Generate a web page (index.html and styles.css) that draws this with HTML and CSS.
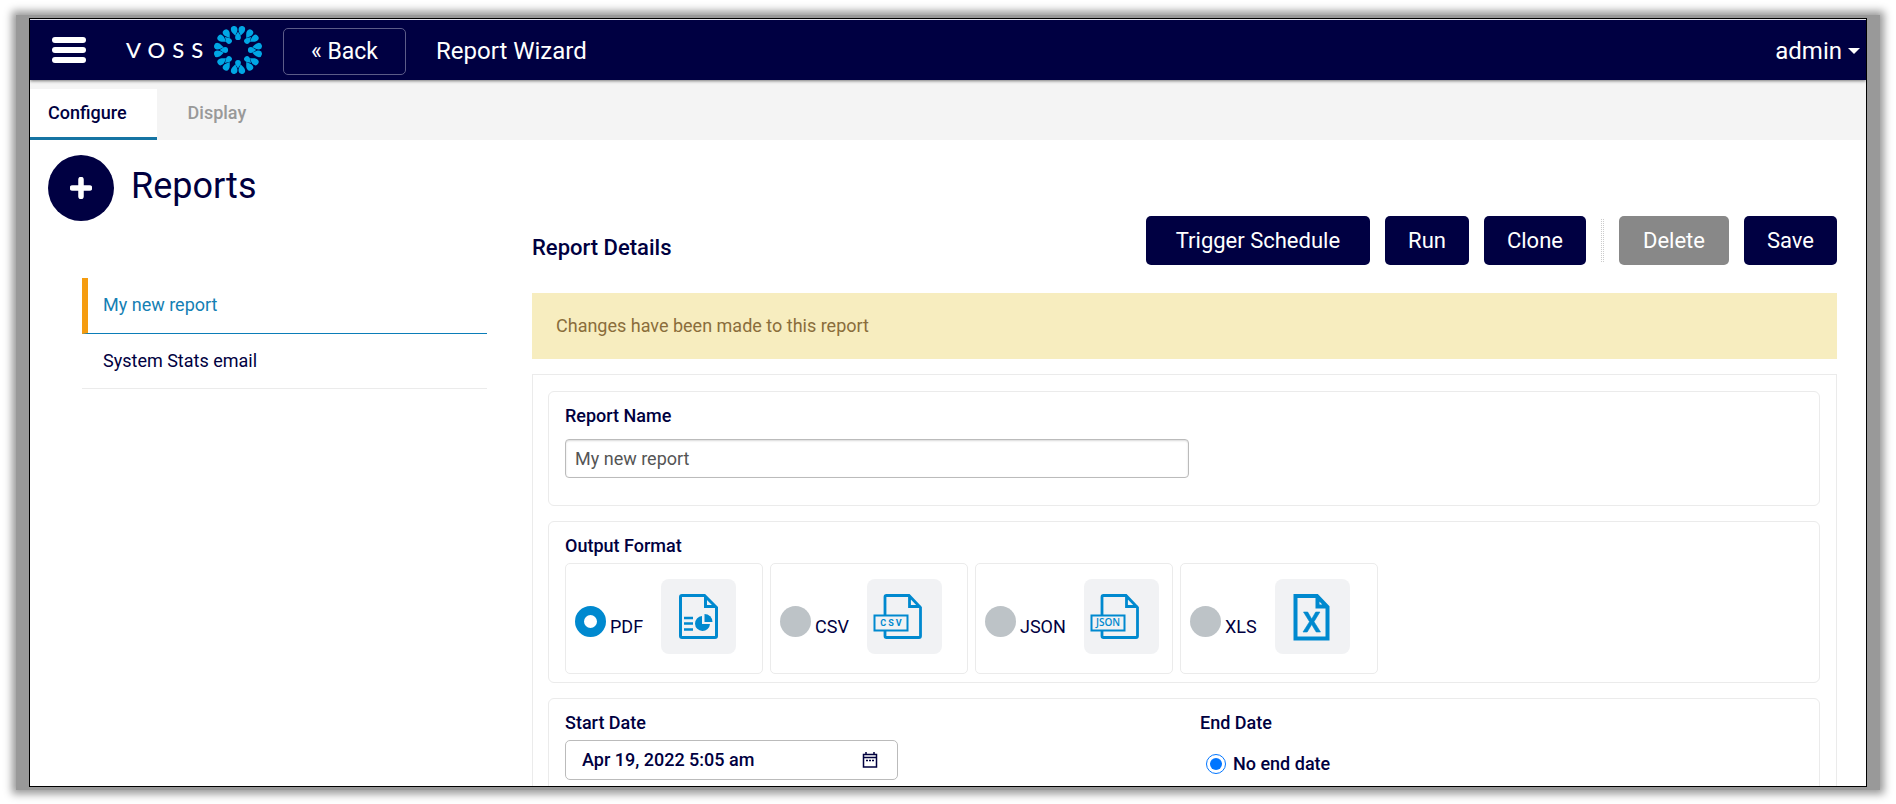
FILE: index.html
```
<!DOCTYPE html>
<html lang="en">
<head>
<meta charset="utf-8">
<title>Report Wizard</title>
<link rel="stylesheet" href="styles.css">
</head>
<body>
<div class="backdrop">
<div class="window">
  <header class="topbar">
    <button class="menu" type="button" aria-label="Menu"><span></span><span></span><span></span></button>
    <div class="brand">
      <span class="brand-name">VOSS</span>
      <svg class="brand-mark" viewBox="-25 -25 50 50" aria-hidden="true">
        <defs>
          <path id="outer" d="M0-14.500C-1.500-17-3.300-18.500-3.300-21A3.300 3.300 0 0 1 3.300-21C3.300-18.500 1.500-17 0-14.500Z"/>
          <path id="inner" d="M0-18.500C-1.200-16-2.900-14.800-2.900-12.800A2.900 2.900 0 0 0 2.900-12.800C2.900-14.800 1.200-16 0-18.500Z"/>
          <g id="petals"><use href="#outer" transform="rotate(-10.500)"/><use href="#outer" transform="rotate(10.500)"/><use href="#inner"/></g>
        </defs>
        <g fill="#00a7e5">
          <use href="#petals"/><use href="#petals" transform="rotate(45)"/><use href="#petals" transform="rotate(90)"/><use href="#petals" transform="rotate(135)"/>
          <use href="#petals" transform="rotate(180)"/><use href="#petals" transform="rotate(225)"/><use href="#petals" transform="rotate(270)"/><use href="#petals" transform="rotate(315)"/>
        </g>
      </svg>
    </div>
    <button class="back" type="button">« Back</button>
    <h1 class="page-name">Report Wizard</h1>
    <button class="user" type="button">admin<span class="caret"></span></button>
  </header>

  <nav class="tabs">
    <a class="tab tab-active" href="#configure">Configure</a>
    <a class="tab" href="#display">Display</a>
  </nav>

  <div class="content">
    <aside class="side">
      <div class="side-head">
        <button class="add" type="button" aria-label="Add report">
          <svg viewBox="0 0 22 22" width="22" height="22"><path d="M11 2.500v17M2.500 11h17" stroke="#fff" stroke-width="5.500" stroke-linecap="round"/></svg>
        </button>
        <h2 class="side-title">Reports</h2>
      </div>
      <ul class="reports">
        <li><a class="report report-active" href="#my-new-report">My new report</a></li>
        <li><a class="report" href="#system-stats">System Stats email</a></li>
      </ul>
    </aside>

    <main class="main">
      <div class="toolbar">
        <h3 class="toolbar-title">Report Details</h3>
        <button class="btn btn-wide" type="button">Trigger Schedule</button>
        <button class="btn" type="button">Run</button>
        <button class="btn" type="button">Clone</button>
        <span class="divider"></span>
        <button class="btn btn-muted" type="button">Delete</button>
        <button class="btn" type="button">Save</button>
      </div>
      <p class="notice">Changes have been made to this report</p>

      <form class="panel">
        <section class="group group-name">
          <label class="label" for="name">Report Name</label>
          <input class="name-input" id="name" type="text" value="My new report">
        </section>

        <section class="group group-format">
          <h4 class="label">Output Format</h4>
          <div class="formats">
            <label class="format">
              <input class="dot" type="radio" name="format" checked><span class="format-name">PDF</span>
              <span class="tile"><svg viewBox="0 0 75 75" fill="none" stroke="#0089cf" stroke-width="3">
                <path d="M21 16.500H43.500L55.500 28.500V57a1.500 1.500 0 0 1-1.500 1.500H21a1.500 1.500 0 0 1-1.500-1.500V18a1.500 1.500 0 0 1 1.500-1.500ZM44.500 17V27.500H55"/>
                <path d="M23 39h9M23 44.500h9M23 50.500h9" stroke-width="2.500"/>
                <path d="M41 37v8h8a7.500 7.500 0 1 1-8-8Z" fill="#0089cf" stroke="none"/><path d="M43.500 35a8 8 0 0 1 8 8h-8Z" fill="#0089cf" stroke="none"/></svg></span>
            </label>
            <label class="format">
              <input class="dot" type="radio" name="format"><span class="format-name">CSV</span>
              <span class="tile"><svg viewBox="0 0 75 75" fill="none" stroke="#0089cf">
                <path d="M18 36V18a1.500 1.500 0 0 1 1.500-1.500H42L53.500 28.500V57a1.500 1.500 0 0 1-1.500 1.500H19.500A1.500 1.500 0 0 1 18 57V51M42.500 17V27.500H53.500" stroke-width="2.800"/>
                <rect x="7.500" y="36.500" width="33" height="15" stroke-width="2"/>
                <text x="25" y="47" class="tile-text tile-csv">CSV</text></svg></span>
            </label>
            <label class="format">
              <input class="dot" type="radio" name="format"><span class="format-name">JSON</span>
              <span class="tile"><svg viewBox="0 0 75 75" fill="none" stroke="#0089cf">
                <path d="M18 36V18a1.500 1.500 0 0 1 1.500-1.500H42L53.500 28.500V57a1.500 1.500 0 0 1-1.500 1.500H19.500A1.500 1.500 0 0 1 18 57V51M42.500 17V27.500H53.500" stroke-width="2.800"/>
                <rect x="7.500" y="36.500" width="33" height="15" stroke-width="2"/>
                <text x="24" y="47" class="tile-text">JSON</text></svg></span>
            </label>
            <label class="format">
              <input class="dot" type="radio" name="format"><span class="format-name">XLS</span>
              <span class="tile"><svg viewBox="0 0 75 75" fill="none" stroke="#0089cf" stroke-width="4">
                <path d="M20.500 17H42L52.500 28V59.500H20.500ZM42.500 17V27.500H52.500"/>
                <path d="M28.500 33h4.200l4 7 4-7h4.200L39 42.700 45.500 53h-4.300L36.700 45.500 32.200 53H28L34.500 42.700Z" fill="#0089cf" stroke="#0089cf" stroke-width="0.600"/></svg></span>
            </label>
          </div>
        </section>

        <section class="group group-dates">
          <div class="date-col">
            <label class="label" for="start">Start Date</label>
            <div class="date-box">
              <input class="date-input" id="start" type="text" value="Apr 19, 2022 5:05 am">
              <svg class="calendar" viewBox="0 0 16 18" width="16" height="18" fill="none" stroke="#00003f"><path d="M1.500 3.500h13v12.500h-13Z" stroke-width="1.500"/><path d="M1.500 6.500h13M4 1v3M12 1v3" stroke-width="1.500"/><path d="M4 9.500h2M7 9.500h2M10 9.500h2" stroke-width="1.500"/></svg>
            </div>
          </div>
          <div class="date-col">
            <h4 class="label">End Date</h4>
            <label class="choice"><input type="radio" name="end" checked>No end date</label>
          </div>
        </section>
      </form>
    </main>
  </div>
</div>
</div>
</body>
</html>
```
FILE: styles.css
```
* { box-sizing: border-box; }

body {
  margin: 0;
  height: 100vh;
  padding: 15px 16px 14px;
  overflow: hidden;
  background: #fff;
  color: #00003f;
  font: 18px/24px Roboto, "Liberation Sans", sans-serif;
}

h1, h2, h3, h4, p, ul { margin: 0; padding: 0; font-weight: 400; }
ul { list-style: none; }
a { color: inherit; text-decoration: none; }
button, input { font: inherit; color: inherit; }
button { padding: 0; border: 0; background: none; cursor: pointer; }

/* window frame */
.backdrop {
  height: 100%;
  padding: 3px 13px;
  background: #999;
  box-shadow: 0 0 8px 4px #999;
}
.window {
  height: 100%;
  overflow: hidden;
  border: 1px solid #000;
  background: #fff;
}

/* top bar */
.topbar {
  position: relative;
  display: flex;
  align-items: center;
  height: 61px;
  padding: 0 6px 0 22px;
  border-top: 1px solid #e4e4ec;
  background: #000042;
  color: #fff;
  font-size: 24px;
  box-shadow: 0 1px 3px rgba(0, 0, 0, .5);
}
.menu { display: flex; flex-direction: column; gap: 4px; width: 34px; }
.menu span { height: 6px; border-radius: 3px; background: #fff; }
.brand { display: flex; align-items: center; margin-left: 40px; }
.brand-name { width: 87px; font: 500 22px/24px Lato, sans-serif; letter-spacing: 7px; }
.brand-mark { width: 50px; height: 50px; }
.back {
  height: 47px;
  width: 123px;
  margin: 2px 0 0 20px;
  padding-top: 1px;
  border: 1px solid #5c5c88;
  border-radius: 5px;
  font-size: 23px;
}
.page-name { flex: 1; margin-left: 30px; padding-top: 2px; font-size: 24px; }
.user { display: flex; align-items: center; gap: 6px; padding-top: 2px; }
.caret { border: 6px solid transparent; border-top-color: #fff; border-bottom: 0; }

/* tabs */
.tabs { display: flex; height: 60px; padding-top: 9px; background: #f4f4f4; }
.tab { padding: 12px 30px 12px 18px; color: #999; font-weight: 500; }
.tab + .tab { padding-left: 31px; }
.tab-active { border-bottom: 3px solid #1574a3; background: #fff; color: #00003f; }

.content {
  display: grid;
  grid-template-columns: 439fr 1305fr;
  gap: 45px;
  padding: 15px 29px 0 18px;
}

/* report list */
.side-head { display: flex; align-items: center; gap: 17px; }
.add {
  display: grid;
  place-items: center;
  width: 66px;
  height: 66px;
  border-radius: 50%;
  background: #000042;
}
.side-title { font-size: 36px; line-height: 60px; padding-bottom: 4px; }
.reports { margin: 57px 0 0 34px; }
.report { display: block; height: 55px; padding: 15px 0 0 21px; border-bottom: 1px solid #ebebeb; }
.report-active {
  height: 56px;
  padding-left: 15px;
  border-left: 6px solid #f59c0f;
  border-bottom-color: #0b7db8;
  color: #1580b4;
}

/* details */
.main { min-width: 0; padding-top: 61px; }
.toolbar { display: flex; align-items: center; gap: 15px; }
.toolbar-title { flex: 1; padding-top: 14px; font-size: 22px; font-weight: 500; }
.btn {
  height: 49px;
  padding: 0 23px;
  border-radius: 5px;
  background: #000042;
  color: #fff;
  font-size: 22px;
}
.btn-wide { padding: 0 30px; }
.btn-muted { padding: 0 24px; background: #888; }
.divider { width: 3px; height: 43px; border: 1px dotted #ccc; border-width: 0 1px; }
.notice { margin-top: 28px; padding: 21px 24px; background: #f7edbf; color: #8a6d3b; }

.panel { display: grid; gap: 15px; margin-top: 15px; padding: 16px 16px 0 15px; border: 1px solid #ebebeb; }
.group { border: 1px solid #ebebeb; border-radius: 6px; padding: 12px 16px; }
.label { display: block; font-weight: 500; }
.group-name { padding-bottom: 27px; }
.name-input {
  display: block;
  width: 624px;
  max-width: 100%;
  height: 39px;
  margin-top: 11px;
  padding: 0 9px;
  border: 1px solid #bbb;
  border-radius: 4px;
  color: #555;
  box-shadow: inset 0 1px 2px rgba(0, 0, 0, .15);
}
.group-format { padding-bottom: 8px; }
.formats { display: flex; gap: 7px; margin-top: 5px; }
.format {
  display: flex;
  align-items: center;
  width: 198px;
  height: 111px;
  padding: 0 9px;
  border: 1px solid #ebebeb;
  border-radius: 5px;
}
.dot {
  appearance: none;
  width: 31px;
  height: 31px;
  margin: 6px 4px 0 0;
  border-radius: 50%;
  background: #bdc3c7;
}
.dot:checked { border: 9px solid #0089cf; background: #fff; }
.format-name { padding-top: 17px; }
.tile { width: 75px; height: 75px; margin: 0 0 4px 18px; border-radius: 8px; background: #f1f2f4; }
.tile svg { display: block; }
.tile-text { fill: #0089cf; stroke: none; font: 600 10px "Open Sans", sans-serif; text-anchor: middle; }
.tile-csv { font: 700 9px Roboto, sans-serif; letter-spacing: 2px; }

.group-dates { display: grid; grid-template-columns: 1fr 1fr; gap: 32px; height: 200px; }
.date-box {
  display: flex;
  align-items: center;
  width: 333px;
  height: 40px;
  margin-top: 5px;
  padding: 0 19px 0 16px;
  border: 1px solid #bbb;
  border-radius: 5px;
}
.date-input { flex: 1; min-width: 0; padding: 0; border: 0; outline: 0; background: none; font-weight: 500; }
.choice { display: flex; align-items: center; gap: 7px; margin: 17px 0 0 6px; font-weight: 500; }
.choice input { width: 20px; height: 20px; margin: 0; accent-color: #0075ff; }
```
